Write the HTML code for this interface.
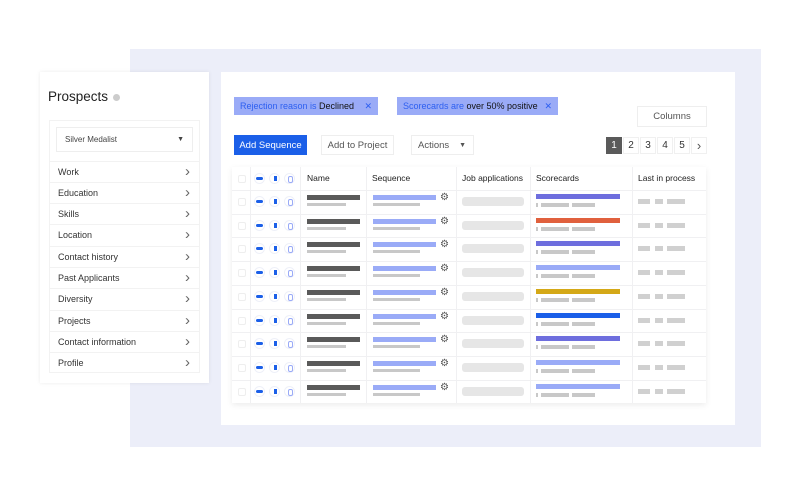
<!DOCTYPE html>
<html><head><meta charset="utf-8"><style>
*{box-sizing:border-box;margin:0;padding:0}
body{width:800px;height:500px;background:#fff;position:relative;overflow:hidden;font-family:"Liberation Sans",sans-serif;color:#333}
.a{position:absolute}
.lav{left:130px;top:49px;width:631px;height:398px;background:#eceef9}
.card{left:221px;top:72px;width:514px;height:353px;background:#fff}
.lp{left:40px;top:72px;width:169px;height:311px;background:#fff;box-shadow:0 0 4px rgba(0,0,0,.08)}
.chip{height:18px;background:#9aabf7;font-size:9px;line-height:18px;padding-left:6px;color:#2d5ff0;white-space:nowrap}
.chip b{font-weight:normal;color:#111}
.chip i{position:absolute;right:6px;top:0;font-style:normal;color:#2d5ff0}
.btn{height:20px;border:1px solid #eee;font-size:9.5px;display:flex;align-items:center;justify-content:center;color:#555;background:#fff}
.pg{top:137px;width:16px;height:17px;font-size:10px;line-height:16px;text-align:center;border:1px solid #f0f0f0;color:#333}
.tbl{left:232px;top:167px;width:474px;height:236px;background:#fff;box-shadow:0 2px 6px rgba(0,0,0,.08)}
.vl{top:0;width:1px;height:236px;background:#f0f0f2}
.hl{left:0;width:474px;height:1px;background:#f0f0f2}
.th{top:0;font-size:8.5px;line-height:23px;color:#222}
.r{position:absolute;left:0;width:474px;height:24px}
.r div{position:absolute}
.cb{left:6px;top:8px;width:8px;height:8px;border:1px solid #eee;border-radius:2px}
.ic{width:11px;height:11px;border-radius:50%;border:1px solid #eef0f8;top:6px}
.ic1{left:22px}.ic1:after{content:"";position:absolute;left:1px;top:3px;width:7px;height:3px;border-radius:2px;background:#1b5fe8}
.ic2{left:37px}.ic2:after{content:"";position:absolute;left:2px;top:2px;width:5px;height:5px;background:#1b5fe8;box-shadow:inset 2px 0 #fff}
.ic3{left:52px}.ic3:after{content:"";position:absolute;left:3px;top:2px;width:3px;height:5px;border-radius:2px;border:1px solid #9aabf7}
.n1{left:75px;top:5px;width:53px;height:5px;background:#5a5a5a}
.n2{left:75px;top:13px;width:39px;height:3px;background:#c8c8c8}
.s1{left:141px;top:5px;width:63px;height:5px;background:#9aabf7}
.s2{left:141px;top:13px;width:47px;height:3px;background:#c8c8c8}
.g{left:208px;top:3px;font-size:10px;line-height:10px;color:#555}
.j{left:230px;top:7px;width:62px;height:9px;border-radius:3px;background:#e6e6e6}
.c1{left:304px;top:4px;width:84px;height:5px}
.t{left:304px;top:13px;width:2px;height:4px;background:#c8c8c8}
.c2{left:309px;top:13px;width:28px;height:4px;background:#c8c8c8}
.c3{left:340px;top:13px;width:23px;height:4px;background:#c8c8c8}
.l1{left:406px;top:9px;width:12px;height:5px;background:#d0d0d0}
.l2{left:423px;top:9px;width:8px;height:5px;background:#d0d0d0}
.l3{left:435px;top:9px;width:18px;height:5px;background:#d0d0d0}
.it{position:absolute;left:49px;width:151px;height:21.3px;border-top:1px solid #f2f2f2;font-size:9px;line-height:20px;padding-left:9px;color:#333}
.it:after{content:"›";position:absolute;right:10px;top:1px;font-size:15px;line-height:18px;color:#666}
</style></head><body>
<div class="a lav"></div>
<div class="a card"></div>
<div class="a lp"></div>
<div class="a" style="left:48px;top:89px;font-size:13.5px;color:#222">Prospects</div>
<div class="a" style="left:113px;top:94px;width:7px;height:7px;border-radius:50%;background:#ccc"></div>
<div class="a" style="left:49px;top:120px;width:151px;height:253px;border:1px solid #f2f2f2"></div>
<div class="a" style="left:56px;top:127px;width:137px;height:25px;border:1px solid #eee;font-size:8px;line-height:24px;padding-left:8px;color:#444">Silver Medalist<span style="position:absolute;right:8px;top:0;font-size:7px">▼</span></div>
<div class="it" style="top:160.5px">Work</div>
<div class="it" style="top:181.8px">Education</div>
<div class="it" style="top:203.1px">Skills</div>
<div class="it" style="top:224.4px">Location</div>
<div class="it" style="top:245.7px">Contact history</div>
<div class="it" style="top:267px">Past Applicants</div>
<div class="it" style="top:288.3px">Diversity</div>
<div class="it" style="top:309.6px">Projects</div>
<div class="it" style="top:330.9px">Contact information</div>
<div class="it" style="top:352.2px">Profile</div>

<div class="a chip" style="left:234px;top:97px;width:144px">Rejection reason is <b>Declined</b><i>✕</i></div>
<div class="a chip" style="left:397px;top:97px;width:161px">Scorecards are <b>over 50% positive</b><i>✕</i></div>
<div class="a btn" style="left:637px;top:106px;width:70px;height:21px">Columns</div>
<div class="a btn" style="left:234px;top:135px;width:73px;background:#1b5fe8;border-color:#1b5fe8;color:#fff">Add Sequence</div>
<div class="a btn" style="left:321px;top:135px;width:73px">Add to Project</div>
<div class="a btn" style="left:411px;top:135px;width:63px;justify-content:flex-start;padding-left:6px">Actions<span style="position:absolute;right:7px;font-size:7px">▼</span></div>
<div class="a pg" style="left:606px;background:#5a5a5a;color:#fff;border-color:#5a5a5a">1</div>
<div class="a pg" style="left:623px">2</div>
<div class="a pg" style="left:640px">3</div>
<div class="a pg" style="left:657px">4</div>
<div class="a pg" style="left:674px">5</div>
<div class="a pg" style="left:691px;font-size:13px;line-height:15px;color:#555">›</div>

<div class="a tbl">
<div class="a vl" style="left:18px"></div><div class="a vl" style="left:68px"></div><div class="a vl" style="left:134px"></div><div class="a vl" style="left:224px"></div><div class="a vl" style="left:298px"></div><div class="a vl" style="left:400px"></div>
<div class="r" style="top:0"><div class="cb"></div><div class="ic ic1"></div><div class="ic ic2"></div><div class="ic ic3"></div></div>
<div class="a th" style="left:75px">Name</div><div class="a th" style="left:140px">Sequence</div><div class="a th" style="left:230px">Job applications</div><div class="a th" style="left:304px">Scorecards</div><div class="a th" style="left:406px">Last in process</div>
<div class="a hl" style="top:23px"></div>
<div class="r" style="top:23px"><div class="cb"></div><div class="ic ic1"></div><div class="ic ic2"></div><div class="ic ic3"></div><div class="n1"></div><div class="n2"></div><div class="s1"></div><div class="s2"></div><div class="g">⚙</div><div class="j"></div><div class="c1" style="background:#6e6ede"></div><div class="t"></div><div class="c2"></div><div class="c3"></div><div class="l1"></div><div class="l2"></div><div class="l3"></div></div>
<div class="a hl" style="top:46.7px"></div>
<div class="r" style="top:46.7px"><div class="cb"></div><div class="ic ic1"></div><div class="ic ic2"></div><div class="ic ic3"></div><div class="n1"></div><div class="n2"></div><div class="s1"></div><div class="s2"></div><div class="g">⚙</div><div class="j"></div><div class="c1" style="background:#e0603d"></div><div class="t"></div><div class="c2"></div><div class="c3"></div><div class="l1"></div><div class="l2"></div><div class="l3"></div></div>
<div class="a hl" style="top:70.4px"></div>
<div class="r" style="top:70.4px"><div class="cb"></div><div class="ic ic1"></div><div class="ic ic2"></div><div class="ic ic3"></div><div class="n1"></div><div class="n2"></div><div class="s1"></div><div class="s2"></div><div class="g">⚙</div><div class="j"></div><div class="c1" style="background:#6e6ede"></div><div class="t"></div><div class="c2"></div><div class="c3"></div><div class="l1"></div><div class="l2"></div><div class="l3"></div></div>
<div class="a hl" style="top:94.1px"></div>
<div class="r" style="top:94.1px"><div class="cb"></div><div class="ic ic1"></div><div class="ic ic2"></div><div class="ic ic3"></div><div class="n1"></div><div class="n2"></div><div class="s1"></div><div class="s2"></div><div class="g">⚙</div><div class="j"></div><div class="c1" style="background:#9aabf7"></div><div class="t"></div><div class="c2"></div><div class="c3"></div><div class="l1"></div><div class="l2"></div><div class="l3"></div></div>
<div class="a hl" style="top:117.8px"></div>
<div class="r" style="top:117.8px"><div class="cb"></div><div class="ic ic1"></div><div class="ic ic2"></div><div class="ic ic3"></div><div class="n1"></div><div class="n2"></div><div class="s1"></div><div class="s2"></div><div class="g">⚙</div><div class="j"></div><div class="c1" style="background:#d4a817"></div><div class="t"></div><div class="c2"></div><div class="c3"></div><div class="l1"></div><div class="l2"></div><div class="l3"></div></div>
<div class="a hl" style="top:141.5px"></div>
<div class="r" style="top:141.5px"><div class="cb"></div><div class="ic ic1"></div><div class="ic ic2"></div><div class="ic ic3"></div><div class="n1"></div><div class="n2"></div><div class="s1"></div><div class="s2"></div><div class="g">⚙</div><div class="j"></div><div class="c1" style="background:#1b5fe8"></div><div class="t"></div><div class="c2"></div><div class="c3"></div><div class="l1"></div><div class="l2"></div><div class="l3"></div></div>
<div class="a hl" style="top:165.2px"></div>
<div class="r" style="top:165.2px"><div class="cb"></div><div class="ic ic1"></div><div class="ic ic2"></div><div class="ic ic3"></div><div class="n1"></div><div class="n2"></div><div class="s1"></div><div class="s2"></div><div class="g">⚙</div><div class="j"></div><div class="c1" style="background:#6e6ede"></div><div class="t"></div><div class="c2"></div><div class="c3"></div><div class="l1"></div><div class="l2"></div><div class="l3"></div></div>
<div class="a hl" style="top:188.9px"></div>
<div class="r" style="top:188.9px"><div class="cb"></div><div class="ic ic1"></div><div class="ic ic2"></div><div class="ic ic3"></div><div class="n1"></div><div class="n2"></div><div class="s1"></div><div class="s2"></div><div class="g">⚙</div><div class="j"></div><div class="c1" style="background:#9aabf7"></div><div class="t"></div><div class="c2"></div><div class="c3"></div><div class="l1"></div><div class="l2"></div><div class="l3"></div></div>
<div class="a hl" style="top:212.6px"></div>
<div class="r" style="top:212.6px"><div class="cb"></div><div class="ic ic1"></div><div class="ic ic2"></div><div class="ic ic3"></div><div class="n1"></div><div class="n2"></div><div class="s1"></div><div class="s2"></div><div class="g">⚙</div><div class="j"></div><div class="c1" style="background:#9aabf7"></div><div class="t"></div><div class="c2"></div><div class="c3"></div><div class="l1"></div><div class="l2"></div><div class="l3"></div></div>
</div>
</body></html>
